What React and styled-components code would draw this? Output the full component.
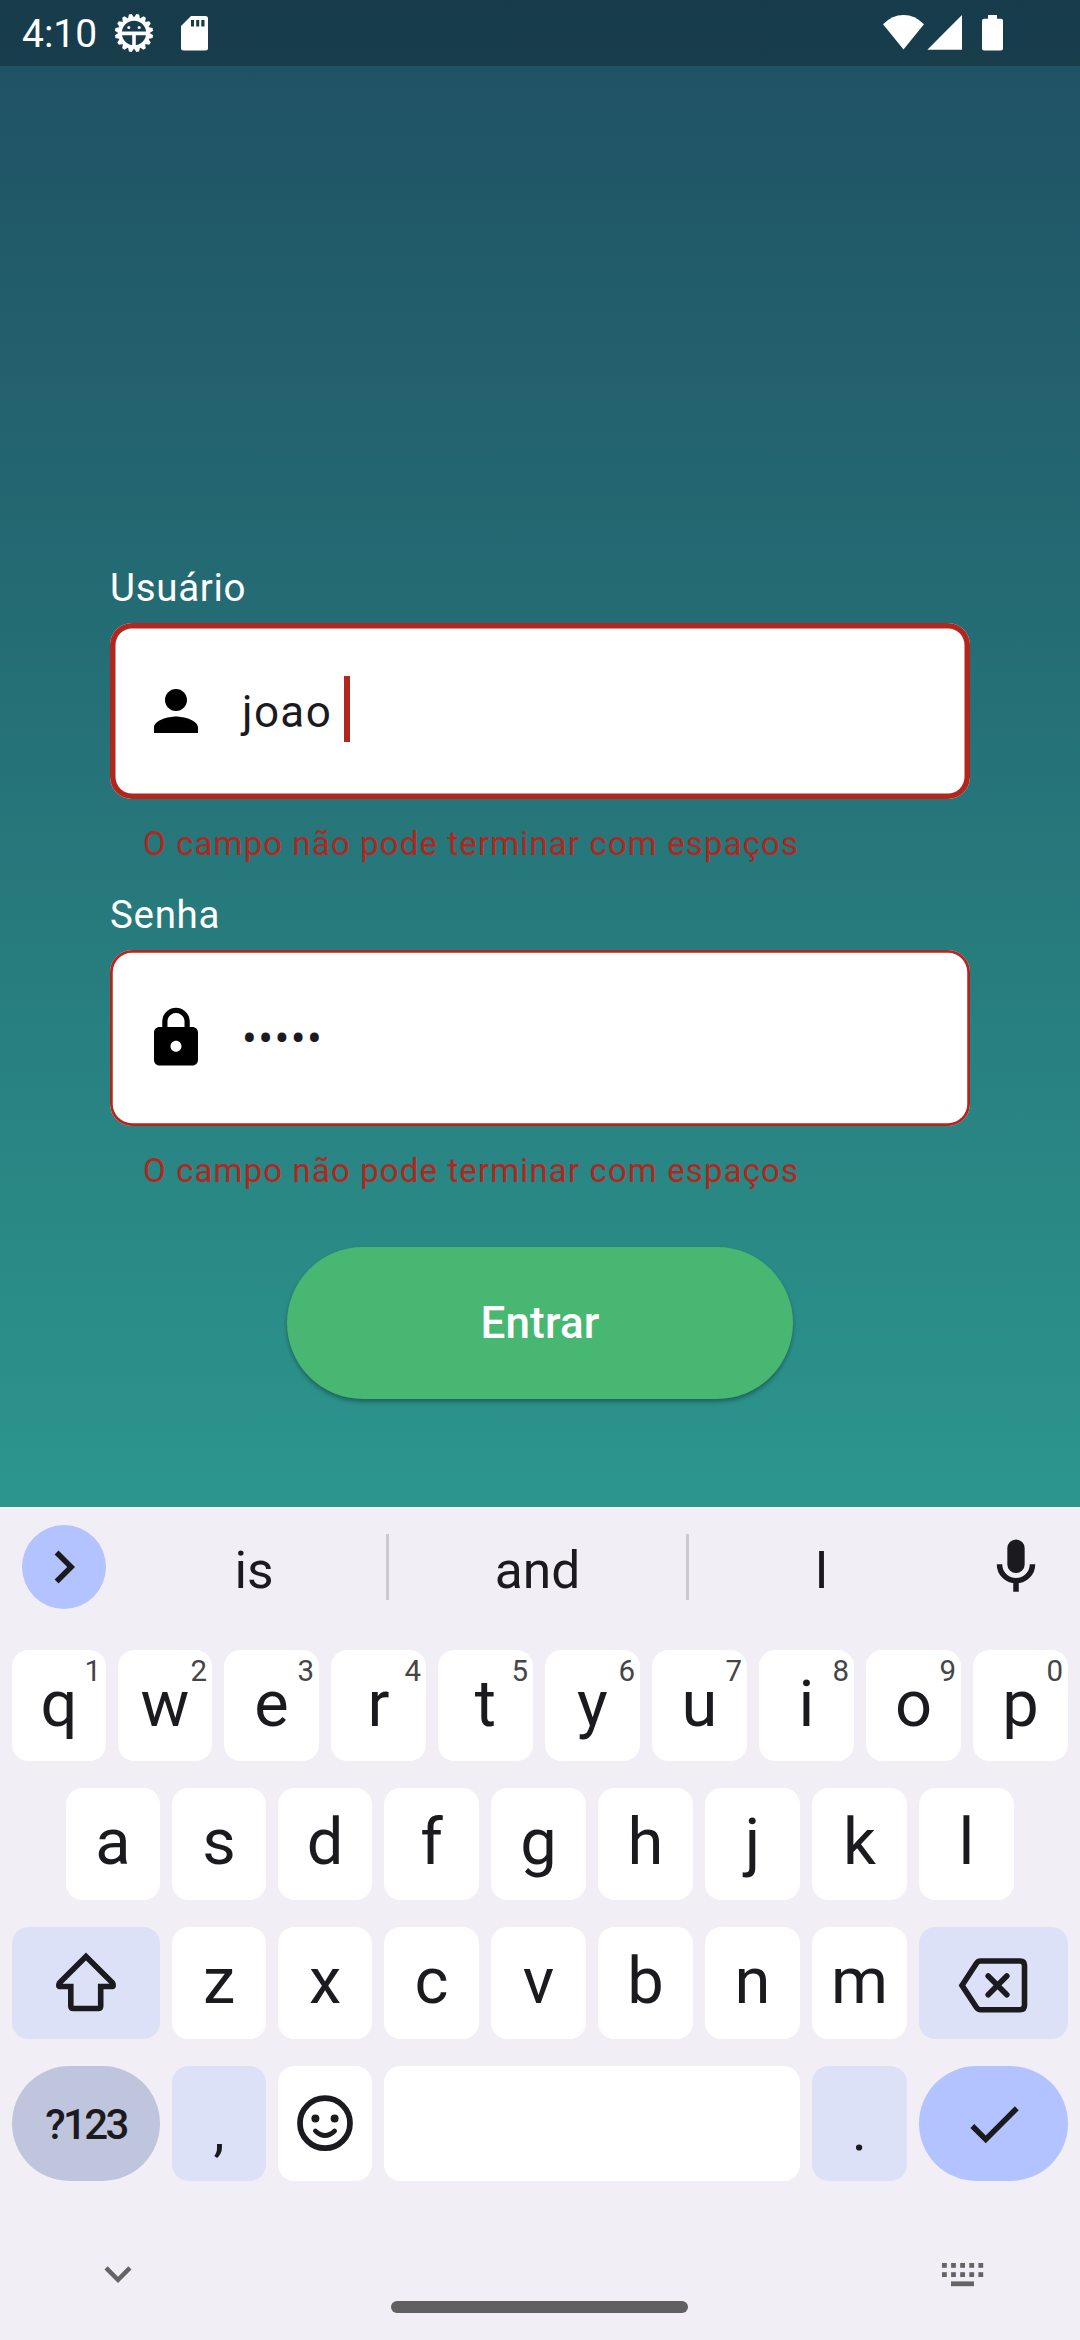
import React from "react";
import styled, { createGlobalStyle } from "styled-components";
import { MdChevronRight, MdCheck, MdExpandMore, MdPerson, MdLock } from "react-icons/md";

const GlobalStyle = createGlobalStyle`
  * { box-sizing: border-box; }
  body { margin: 0; font-family: Roboto, "Liberation Sans", sans-serif; }
`;

const INK = "#1b1b1f";

const Screen = styled.div`
  width: 1080px;
  height: 2340px;
  display: flex;
  flex-direction: column;
  overflow: hidden;
  background: #f1eff5;
`;

const LoginPage = styled.main`
  height: 1507px;
  display: flex;
  flex-direction: column;
  background: linear-gradient(180deg, #1f4f63 0%, #2c968d 100%);
`;

const StatusBar = styled.header`
  height: 66px;
  padding: 0 77px 0 22px;
  display: flex;
  align-items: center;
  justify-content: space-between;
  background: rgba(0, 0, 0, 0.25);
  color: #fff;
`;

const StatusGroup = styled.div`
  display: flex;
  align-items: center;
`;

const Clock = styled.span`
  width: 92px;
  font-size: 39px;
  line-height: 46px;
  padding-top: 2px;
`;

const StatusSvg = styled.svg`
  display: block;
  margin-left: ${(p) => p.$gap || 0}px;
`;

const Form = styled.form`
  padding: 502px 110px 0;
  display: flex;
  flex-direction: column;
`;

const Field = styled.div`
  display: flex;
  flex-direction: column;
  margin-bottom: 31px;
`;

const Label = styled.label`
  font-size: 38.5px;
  line-height: 40px;
  letter-spacing: 0.69px;
  color: #fff;
  margin-bottom: 15px;
`;

const InputBox = styled.div`
  height: 176px;
  border-radius: 22px;
  padding-left: 33px;
  display: flex;
  align-items: center;
  background: #fff;
  box-shadow: inset 0 0 0 ${(p) => (p.$focused ? 5.5 : 2.75)}px #b3261e;
  color: #000;
`;

const InputText = styled.span`
  margin-left: 33px;
  padding-top: 2px;
  font-size: 44px;
  line-height: 66px;
  letter-spacing: 1.375px;
  white-space: pre;
  color: ${INK};
`;

const Caret = styled.span`
  width: 5.5px;
  height: 66px;
  margin-top: -4px;
  background: #b3261e;
`;

const ErrorText = styled.p`
  margin: 25px 0 0 33px;
  font-size: 33px;
  line-height: 40px;
  letter-spacing: 1.12px;
  color: #b3261e;
`;

const SubmitButton = styled.button`
  align-self: center;
  width: 506px;
  height: 152px;
  margin-top: 25px;
  padding: 0;
  border: 0;
  border-radius: 76px;
  background: #48b772;
  box-shadow: 0 3px 4px rgba(0, 0, 0, 0.3);
  color: #fff;
  font: 500 44px/60px Roboto, sans-serif;
  letter-spacing: 0.2px;
`;

const Keyboard = styled.section`
  height: 833px;
  display: flex;
  flex-direction: column;
  color: ${INK};
`;

const SuggestionStrip = styled.div`
  height: 143px;
  padding: 0 22px 23px;
  display: flex;
  align-items: center;
`;

const ExpandChip = styled.div`
  width: 84px;
  height: 84px;
  border-radius: 42px;
  display: flex;
  align-items: center;
  justify-content: center;
  background: #b2c3ff;
`;

const Suggestions = styled.div`
  display: grid;
  grid-template-columns: 264px 3px 297px 3px 265px;
  align-items: center;
  margin-left: 16px;
`;

const Suggestion = styled.span`
  text-align: center;
  font-size: 51.5px;
  line-height: 66px;
  padding-top: 8px;
`;

const Divider = styled.span`
  height: 66px;
  background: #cccacf;
`;

const MicSvg = styled.svg`
  margin-left: 29px;
`;

const Rows = styled.div`
  padding: 0 12px;
  display: flex;
  flex-direction: column;
  gap: 27px;
`;

const Row = styled.div`
  display: flex;
  justify-content: center;
  gap: 12px;
  height: ${(p) => p.$h}px;
`;

const keyTones = {
  plain: "#ffffff",
  soft: "#dde1f8",
  mode: "#c0c5de",
  action: "#b2c3ff",
};

const Key = styled.div`
  position: relative;
  flex: none;
  width: ${(p) => p.$w || 95}px;
  border-radius: ${(p) => (p.$pill ? 58 : 16.5)}px;
  background: ${(p) => keyTones[p.$tone || "plain"]};
  display: flex;
  align-items: center;
  justify-content: center;
  padding-bottom: ${(p) => (p.$letter ? 4 : 0)}px;
  font-size: 65px;
  line-height: 76px;
`;

const Hint = styled.span`
  position: absolute;
  top: 5px;
  right: 5px;
  font-size: 29.5px;
  line-height: 32px;
  color: #454548;
`;

const ModeLabel = styled.span`
  font-size: 42px;
  font-weight: 500;
  line-height: 50px;
  letter-spacing: -2.6px;
  padding-top: 3px;
`;

const Punctuation = styled.span`
  font-size: 56px;
  line-height: 66px;
  padding-top: 14px;
`;

const NavBar = styled.nav`
  flex: 1;
  padding: 66px 96px 0 91px;
  display: grid;
  grid-template-columns: 300px 297px 1fr;
  color: #646464;
`;

const HideButton = styled.div`
  height: 54px;
  display: flex;
`;

const HomeIndicator = styled.div`
  height: 12px;
  margin-top: 54px;
  border-radius: 6px;
  background: #606062;
`;

const SwitchButton = styled.div`
  height: 24px;
  margin-top: 16px;
  display: flex;
  justify-content: flex-end;
`;

function BugGearIcon() {
  const teeth = Array.from({ length: 16 }, (_, i) => i * 22.5 + 11.25);
  return (
    <StatusSvg width="40" height="40" viewBox="-20 -20 40 40">
      {teeth.map((a) => (
        <path key={a} d="M-3.2 -15 L-1.4 -19.2 H1.4 L3.2 -15Z" fill="#fff" transform={`rotate(${a})`} />
      ))}
      <circle r="14" fill="none" stroke="#fff" strokeWidth="3.6" />
      <path d="M-13 0.4H13M0 0.4V15" stroke="#fff" strokeWidth="3.6" />
      <circle cx="-5.2" cy="-5.6" r="1.5" fill="#fff" />
      <circle cx="5.2" cy="-5.6" r="1.5" fill="#fff" />
    </StatusSvg>
  );
}

function SdCardIcon() {
  return (
    <StatusSvg $gap={27} width="27" height="35" viewBox="0 0 27 35">
      <path
        fill="#fff"
        fillRule="evenodd"
        d="M10 0H24.5Q27 0 27 2.500V32Q27 34.500 24.500 34.500H2.500Q0 34.500 0 32V10ZM10 4V10.500H13V4ZM15.200 4V10.500H18.200V4ZM20.300 4V10.500H23.500V4Z"
      />
    </StatusSvg>
  );
}

function SignalIcons() {
  return (
    <StatusSvg width="120" height="36" viewBox="0 0 120 36" fill="#fff">
      <path d="M0 9.300Q9 0 20.500 0T41 9.300L20.500 34.500Z" />
      <path d="M44.300 34.800L79 0V34.800Z" />
      <path d="M105 0H114V3.700H118Q120 3.700 120 5.700V33.500Q120 35.500 118 35.500H101Q99 35.500 99 33.500V5.700Q99 3.700 101 3.700H105Z" />
    </StatusSvg>
  );
}

function MicIcon() {
  return (
    <MicSvg width="66" height="66" viewBox="0 0 24 24">
      <rect x="8.850" y="2" width="6.300" height="12.200" rx="3.150" fill={INK} />
      <path d="M6 11A6 6 0 0 0 18 11M12 17V21" fill="none" stroke={INK} strokeWidth="2" />
    </MicSvg>
  );
}

function ShiftIcon() {
  return (
    <svg width="62" height="62" viewBox="0 1 62 62" fill="none" stroke={INK} strokeWidth="5.600">
      <path
        d="M31 5.400L57.600 32Q59.500 35.500 56.500 35.500H45.700V55Q45.700 57.500 43.200 57.500H18.300Q15.800 57.500 15.800 55V35.500H5.500Q2.500 35.500 4.400 32Z"
        strokeLinejoin="miter"
      />
    </svg>
  );
}

function BackspaceIcon() {
  return (
    <svg width="72" height="62" viewBox="1 -4 72 62" fill="none" stroke={INK} strokeWidth="5.600">
      <path d="M23.500 5H63Q67.500 5 67.500 9.500V49.200Q67.500 53.700 63 53.700H23.500Q21 53.700 19.500 51.500L5 29.400L19.500 7.200Q21 5 23.500 5Z" />
      <path d="M31.200 20L49.800 38.800M49.800 20L31.200 38.800" strokeLinecap="round" />
    </svg>
  );
}

function SmileyIcon() {
  return (
    <svg width="56" height="58" viewBox="-28 -28.2 56 58" fill="none" stroke={INK}>
      <circle r="25" strokeWidth="5.700" />
      <circle cx="-9.600" cy="-4.700" r="4" fill={INK} stroke="none" />
      <circle cx="9.600" cy="-4.700" r="4" fill={INK} stroke="none" />
      <path d="M-9.600 7.800Q0 17 9.600 7.800" strokeWidth="4.700" strokeLinecap="round" />
    </svg>
  );
}

function KeyboardIcon() {
  const columns = [0, 9.1, 18.2, 27.3, 36.4];
  return (
    <svg width="42" height="24" viewBox="0 0 42 24" fill="#646464">
      {[0, 9.2].map((y) => columns.map((x) => <rect key={`${x}-${y}`} x={x} y={y} width="4.800" height="4.800" />))}
      <rect x="9" y="18.400" width="23" height="4.800" />
    </svg>
  );
}

const topRow = ["q", "w", "e", "r", "t", "y", "u", "i", "o", "p"];
const homeRow = ["a", "s", "d", "f", "g", "h", "j", "k", "l"];
const bottomRow = ["z", "x", "c", "v", "b", "n", "m"];

export default function App() {
  return (
    <Screen>
      <GlobalStyle />
      <LoginPage>
        <StatusBar>
          <StatusGroup>
            <Clock>4:10</Clock>
            <BugGearIcon />
            <SdCardIcon />
          </StatusGroup>
          <SignalIcons />
        </StatusBar>
        <Form>
          <Field>
            <Label>Usuário</Label>
            <InputBox $focused>
              <MdPerson size={66} />
              <InputText>joao </InputText>
              <Caret />
            </InputBox>
            <ErrorText>O campo não pode terminar com espaços</ErrorText>
          </Field>
          <Field>
            <Label>Senha</Label>
            <InputBox>
              <MdLock size={66} />
              <InputText>•••••</InputText>
            </InputBox>
            <ErrorText>O campo não pode terminar com espaços</ErrorText>
          </Field>
          <SubmitButton type="button">Entrar</SubmitButton>
        </Form>
      </LoginPage>
      <Keyboard>
        <SuggestionStrip>
          <ExpandChip>
            <MdChevronRight size={66} />
          </ExpandChip>
          <Suggestions>
            <Suggestion>is</Suggestion>
            <Divider />
            <Suggestion>and</Suggestion>
            <Divider />
            <Suggestion>I</Suggestion>
          </Suggestions>
          <MicIcon />
        </SuggestionStrip>
        <Rows>
          <Row $h={111}>
            {topRow.map((k, i) => (
              <Key key={k} $letter $w={i < 2 ? 94 : 95}>
                {k}
                <Hint>{(i + 1) % 10}</Hint>
              </Key>
            ))}
          </Row>
          <Row $h={112}>
            {homeRow.map((k, i) => (
              <Key key={k} $letter $w={i < 3 ? 94 : 95}>
                {k}
              </Key>
            ))}
          </Row>
          <Row $h={112}>
            <Key $tone="soft" $w={148}>
              <ShiftIcon />
            </Key>
            {bottomRow.map((k, i) => (
              <Key key={k} $letter $w={i < 2 ? 94 : 95}>
                {k}
              </Key>
            ))}
            <Key $tone="soft" $w={149}>
              <BackspaceIcon />
            </Key>
          </Row>
          <Row $h={115}>
            <Key $tone="mode" $pill $w={148}>
              <ModeLabel>?123</ModeLabel>
            </Key>
            <Key $tone="soft" $w={94}>
              <Punctuation>,</Punctuation>
            </Key>
            <Key $w={94}>
              <SmileyIcon />
            </Key>
            <Key $w={416} />
            <Key $tone="soft">
              <Punctuation>.</Punctuation>
            </Key>
            <Key $tone="action" $pill $w={149}>
              <MdCheck size={66} />
            </Key>
          </Row>
        </Rows>
        <NavBar>
          <HideButton>
            <MdExpandMore size={54} />
          </HideButton>
          <HomeIndicator />
          <SwitchButton>
            <KeyboardIcon />
          </SwitchButton>
        </NavBar>
      </Keyboard>
    </Screen>
  );
}
